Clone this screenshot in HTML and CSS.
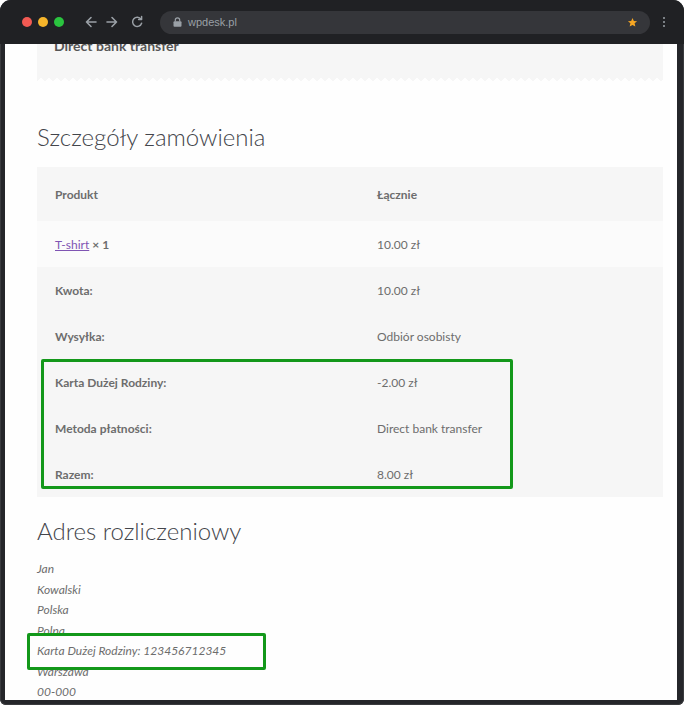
FILE: index.html
```html
<!DOCTYPE html>
<html lang="pl">
<head>
<meta charset="utf-8">
<title>wpdesk.pl</title>
<link rel="stylesheet" href="styles.css">
</head>
<body>
<div class="window">
  <div class="toolbar">
    <div class="lights">
      <span class="light red"></span>
      <span class="light yellow"></span>
      <span class="light green"></span>
    </div>
    <div class="nav">
      <svg width="14" height="14" viewBox="0 0 14 14"><path d="M12 7H2.5M7 2.5L2.5 7L7 11.5" fill="none" stroke="#9aa0a6" stroke-width="1.6" stroke-linecap="round" stroke-linejoin="round"/></svg>
      <svg width="14" height="14" viewBox="0 0 14 14"><path d="M2 7h9.5M7 2.5L11.5 7L7 11.5" fill="none" stroke="#9aa0a6" stroke-width="1.6" stroke-linecap="round" stroke-linejoin="round"/></svg>
      <svg width="14" height="14" viewBox="0 0 14 14"><path d="M11 4.2A4.6 4.6 0 1 0 11.6 8.2" fill="none" stroke="#9aa0a6" stroke-width="1.5" stroke-linecap="round"/><path d="M8.6 4.4H11.6V1.4" fill="none" stroke="#9aa0a6" stroke-width="1.5" stroke-linecap="round" stroke-linejoin="round"/></svg>
    </div>
    <div class="urlbar">
      <svg class="lock" width="9" height="10" viewBox="0 0 9 10"><rect x="0.5" y="4.2" width="8" height="5.5" rx="1" fill="#9aa0a6"/><path d="M2.3 4.5V3a2.2 2.2 0 0 1 4.4 0v1.5" fill="none" stroke="#9aa0a6" stroke-width="1.2"/></svg>
      <span class="url">wpdesk.pl</span>
      <svg class="star" width="11" height="11" viewBox="0 0 24 24"><path d="M12 2l2.9 6.6 7.1.6-5.4 4.7 1.6 7-6.2-3.7-6.2 3.7 1.6-7L2 9.2l7.1-.6z" fill="#f5a623"/></svg>
    </div>
    <div class="menu"><span></span><span></span><span></span></div>
  </div>
  <div class="content">
    <div class="page">
      <div class="paybox">
        <div class="paybox-inner"><strong>Direct bank transfer</strong></div>
        <div class="zigzag"></div>
      </div>

      <h2 class="title">Szczegóły zamówienia</h2>

      <div class="table-wrap">
        <table class="order">
          <thead>
            <tr><th>Produkt</th><th>Łącznie</th></tr>
          </thead>
          <tbody>
            <tr><td><a href="#">T-shirt</a> <strong>× 1</strong></td><td>10.00 zł</td></tr>
          </tbody>
          <tfoot>
            <tr><th>Kwota:</th><td>10.00 zł</td></tr>
            <tr><th>Wysyłka:</th><td>Odbiór osobisty</td></tr>
            <tr><th>Karta Dużej Rodziny:</th><td>-2.00 zł</td></tr>
            <tr><th>Metoda płatności:</th><td>Direct bank transfer</td></tr>
            <tr><th>Razem:</th><td>8.00 zł</td></tr>
          </tfoot>
        </table>
        <div class="highlight hl-table"></div>
      </div>

      <h2 class="title title-address">Adres rozliczeniowy</h2>
      <address class="address">
        Jan<br>
        Kowalski<br>
        Polska<br>
        Polna<br>
        Karta Dużej Rodziny: 123456712345<br>
        Warszawa<br>
        00-000
        <span class="highlight hl-address"></span>
      </address>
    </div>
  </div>
</div>
</body>
</html>
```

FILE: styles.css
```css
* { box-sizing: border-box; }

html, body {
  margin: 0;
  padding: 0;
  background: #ffffff;
}

.window {
  width: 684px;
  height: 705px;
  background: #25262a;
  border-radius: 11px 11px 6px 6px;
  padding: 0 7px 5px 5px;
  display: flex;
  flex-direction: column;
  overflow: hidden;
  box-shadow: inset 0 0 0 1px #3a3b3e;
}

.toolbar {
  height: 44px;
  flex: 0 0 44px;
  display: flex;
  align-items: center;
  background: #202124;
  margin: 0 -7px 0 -5px;
  padding: 0 0 0 22px;
  border-radius: 11px 11px 0 0;
}

.lights {
  display: flex;
  gap: 6px;
}

.light {
  width: 10px;
  height: 10px;
  border-radius: 50%;
  display: block;
}
.light.red { background: #f25a53; }
.light.yellow { background: #f6b52b; }
.light.green { background: #2ac43f; }

.nav {
  display: flex;
  align-items: center;
  gap: 7px;
  margin-left: 20px;
}
.nav svg { display: block; }
.nav svg:last-child { margin-left: 4px; }

.urlbar {
  margin-left: 16px;
  width: 490px;
  height: 23px;
  background: #35363a;
  border-radius: 12px;
  display: flex;
  align-items: center;
  padding: 0 12px 0 13px;
}

.lock { display: block; }

.url {
  font-family: "Liberation Sans", Arial, sans-serif;
  font-size: 11px;
  color: #9aa0a6;
  margin-left: 6px;
  flex: 1;
}

.star { display: block; }

.menu {
  margin-left: 13px;
  display: flex;
  flex-direction: column;
  gap: 2px;
}
.menu span {
  width: 2px;
  height: 2px;
  background: #9aa0a6;
  border-radius: 50%;
  display: block;
}

.content {
  flex: 1;
  background: #fefefe;
  overflow: hidden;
  font-family: Lato, "Open Sans", sans-serif;
  color: #6d6d6d;
}

.page {
  padding: 0 14px 0 32px;
}

.paybox {
  margin-top: -11px;
}

.paybox-inner {
  background: #f6f6f6;
  padding: 3px 17px 20px;
  font-size: 14px;
  line-height: 20px;
  color: #555;
}

.zigzag {
  height: 5px;
  background:
    linear-gradient(135deg, #f6f6f6 33%, transparent 33%) 0 0 / 8px 8px,
    linear-gradient(225deg, #f6f6f6 33%, transparent 33%) 0 0 / 8px 8px;
}

.title {
  font-weight: 300;
  font-size: 24px;
  line-height: 32px;
  color: #43454b;
  margin: 40px 0 14px;
}

.title-address {
  margin: 18px 0 12px;
}

.table-wrap {
  position: relative;
}

.order {
  width: 100%;
  border-collapse: collapse;
  font-size: 12px;
  color: #6d6d6d;
}

.order th,
.order td {
  text-align: left;
  padding: 0 18px;
  height: 46px;
  vertical-align: middle;
}

.order th { font-weight: 700; }
.order th:first-child,
.order td:first-child { width: 322px; }

.order thead th {
  height: 54px;
  background: #f6f6f6;
}

.order tbody td {
  background: #fbfbfb;
  height: 46px;
}

.order tbody strong { font-weight: 700; }

.order a {
  color: #7f54b3;
  text-decoration: underline;
}

.order tfoot th,
.order tfoot td {
  background: #f6f6f6;
}

.highlight {
  position: absolute;
  border: 3px solid #13981a;
  border-radius: 2px;
  display: block;
}

.hl-table {
  left: 4px;
  top: 192px;
  width: 472px;
  height: 130px;
}

.address {
  position: relative;
  font-style: italic;
  font-size: 12px;
  line-height: 20.5px;
  color: #6d6d6d;
}

.hl-address {
  left: -10px;
  top: 74px;
  width: 239px;
  height: 37px;
}
```
